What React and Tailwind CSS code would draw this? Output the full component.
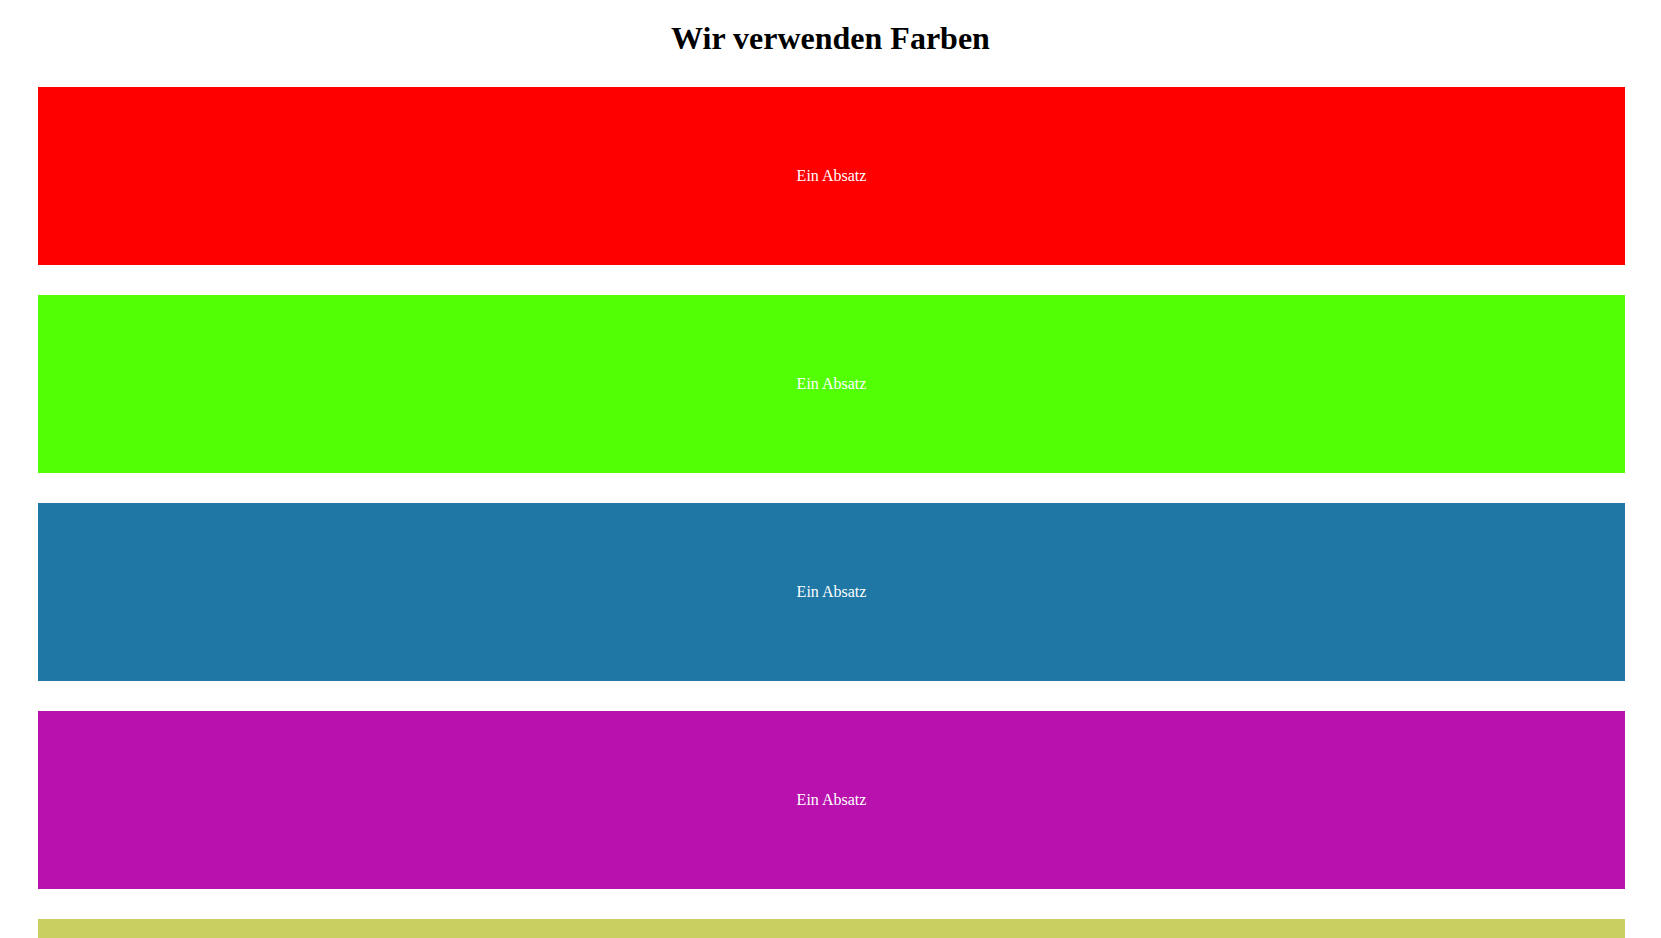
export default function App() {
  const colors = ["bg-[#ff0000]", "bg-[#53ff05]", "bg-[#1e77a4]", "bg-[#b811ae]", "bg-[#c9cf61]"];
  return (
    <div className="min-h-screen bg-white" style={{ fontFamily: '"Liberation Serif", "Times New Roman", serif' }}>
      <h1 className="pt-5 text-center text-[32px] leading-[36px] font-bold text-black">Wir verwenden Farben</h1>
      <div className="mt-[31px] flex flex-col gap-[30px] pl-[38px] pr-[36px] pb-[30px]">
        {colors.map((c, i) => (
          <div key={i} className={`${c} flex h-[178px] items-center justify-center`}>
            <p className="text-[16px] text-white">Ein Absatz</p>
          </div>
        ))}
      </div>
    </div>
  );
}
